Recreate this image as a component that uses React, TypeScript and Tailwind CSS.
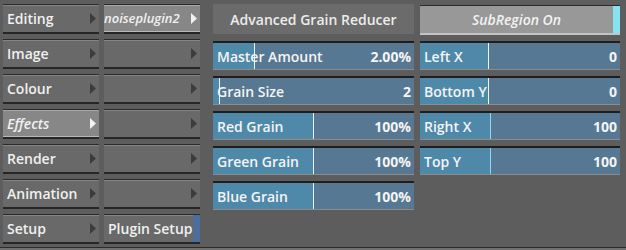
import React from "react";

const font = { fontFamily: '"Open Sans", "DejaVu Sans", sans-serif' };

function Tri({ light }: { light?: boolean }) {
  return (
    <svg width="6" height="11" viewBox="0 0 6 11" className="shrink-0">
      <polygon points="0,0 6,5.5 0,11" fill={light ? "#f2f2f2" : "#3c3c3c"} />
    </svg>
  );
}

function MenuBtn({
  label,
  selected,
  arrow = true,
  strip,
  small,
}: {
  label?: string;
  selected?: boolean;
  arrow?: boolean;
  strip?: boolean;
  small?: boolean;
}) {
  return (
    <div
      className={`h-[30px] flex items-center border-t border-t-[#2a2a2a] border-b-2 border-b-[#262626] ${
        selected
          ? "bg-[#878787] shadow-[inset_0_1px_0_#a6a6a6,inset_0_-1px_0_#b8b8b8]"
          : "bg-[#696969] shadow-[inset_0_1px_0_#858585]"
      }`}
    >
      <span
        className={`flex-1 ${small ? "pl-0 text-[13px]" : "pl-[4px] text-[14px]"} leading-normal text-[#f0f0f0] whitespace-nowrap ${
          selected ? "italic font-semibold" : "font-semibold"
        }`}
      >
        {label}
      </span>
      {arrow && (
        <div className="pr-[3px] flex items-center">
          <Tri light={selected} />
        </div>
      )}
      {strip && <div className="w-[7px] self-stretch bg-[#4d6d9c]" />}
    </div>
  );
}

function Slider({
  label,
  value,
  fill,
  line = "#e8f0f4",
}: {
  label: string;
  value: string;
  fill: number;
  line?: string;
}) {
  return (
    <div className="h-[29px] relative border-t-2 border-t-[#1e1e1e] border-b border-b-[#8c8c8c] bg-[#577893] flex items-center overflow-hidden">
      <div className="absolute left-0 top-0 bottom-0 bg-[#4e89aa]" style={{ width: fill }} />
      <div className="absolute top-0 bottom-0 w-[1px]" style={{ left: fill, background: line }} />
      <span className="relative pl-[4px] flex-1 text-[14px] font-semibold leading-normal text-[#f4f4f4] whitespace-nowrap">
        {label}
      </span>
      <span className="relative pr-[3px] text-[14px] font-bold leading-normal text-[#f4f4f4]">{value}</span>
    </div>
  );
}

export default function App() {
  const col1 = ["Editing", "Image", "Colour", "Effects", "Render", "Animation", "Setup"];
  return (
    <div className="w-[626px] h-[250px] bg-[#5d5d5d] relative overflow-hidden" style={font}>
      <div className="flex pt-[4px] pl-[3px]">
        <div className="w-[96px] flex flex-col gap-[5px]">
          {col1.map((l) => (
            <MenuBtn key={l} label={l} selected={l === "Effects"} />
          ))}
        </div>
        <div className="w-[96px] ml-[5px] flex flex-col gap-[5px]">
          <MenuBtn label="noiseplugin2" selected small />
          <MenuBtn />
          <MenuBtn />
          <MenuBtn />
          <MenuBtn />
          <MenuBtn />
          <MenuBtn label="Plugin Setup" arrow={false} strip />
        </div>
        <div className="w-[201px] ml-[13px] flex flex-col gap-[6px]">
          <div className="h-[30px] bg-[#6b6b6b] flex items-center justify-center text-[14px] font-semibold text-[#ececec] leading-normal">
            Advanced Grain Reducer
          </div>
          <div className="flex flex-col gap-[6px] mt-[1px]">
            <Slider label="Master Amount" value="2.00%" fill={41} />
            <Slider label="Grain Size" value="2" fill={6} />
            <Slider label="Red Grain" value="100%" fill={100} />
            <Slider label="Green Grain" value="100%" fill={100} />
            <Slider label="Blue Grain" value="100%" fill={100} />
          </div>
        </div>
        <div className="w-[200px] ml-[6px] flex flex-col gap-[6px]">
          <div className="h-[30px] mt-[1px] border-t border-t-[#2a2a2a] border-b-2 border-b-[#c4c4c4] bg-[#989898] flex items-center">
            <span className="flex-1 text-center italic font-semibold text-[14px] text-[#f2f2f2] leading-normal">
              SubRegion On
            </span>
            <div className="w-[7px] self-stretch bg-[#86e3f2]" />
          </div>
          <div className="flex flex-col gap-[6px]">
            <Slider label="Left X" value="0" fill={68} line="#f0f4f6" />
            <Slider label="Bottom Y" value="0" fill={68} line="#f0f4f6" />
            <Slider label="Right X" value="100" fill={70} line="#8fd8ea" />
            <Slider label="Top Y" value="100" fill={70} line="#8fd8ea" />
          </div>
        </div>
      </div>
      <div className="absolute left-0 right-0 bottom-0 h-[3px] bg-[#707070] border-t border-t-[#2c2c2c]" />
    </div>
  );
}
